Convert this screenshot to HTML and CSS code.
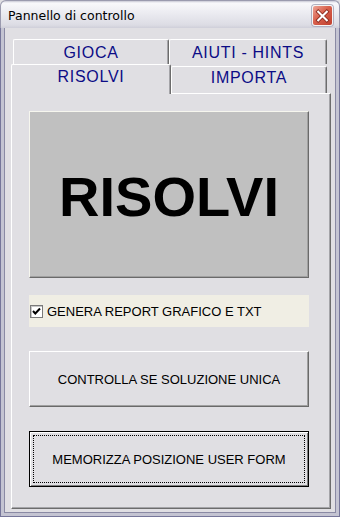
FILE: index.html
```html
<!DOCTYPE html>
<html lang="it">
<head>
<meta charset="utf-8">
<title>Pannello di controllo</title>
<link rel="stylesheet" href="styles.css">
</head>
<body>
<div class="window">
  <div class="titlebar">
    <span class="title">Pannello di controllo</span>
    <span class="close">
      <svg width="20" height="20" viewBox="0 0 20 20">
        <path d="M5.5 5.5 L14.5 14.5 M14.5 5.5 L5.5 14.5" stroke="#8a2a1e" stroke-width="4" stroke-linecap="square" fill="none"/>
        <path d="M5.5 5.5 L14.5 14.5 M14.5 5.5 L5.5 14.5" stroke="#ffffff" stroke-width="2.2" stroke-linecap="square" fill="none"/>
      </svg>
    </span>
  </div>
  <div class="frame">
    <div class="tabs">
      <div class="tabrow row1">
        <div class="tab t-gioca">GIOCA</div>
        <div class="tab t-aiuti">AIUTI - HINTS</div>
      </div>
      <div class="tabrow row2">
        <div class="tab t-risolvi selected">RISOLVI</div>
        <div class="tab t-importa">IMPORTA</div>
      </div>
    </div>
    <div class="panel">
      <div class="btn big">RISOLVI</div>
      <label class="check">
        <span class="box">
          <svg width="11" height="11" viewBox="0 0 11 11">
            <path d="M2 5 L4.3 7.5 L9 2.5" stroke="#000" stroke-width="2" fill="none"/>
          </svg>
        </span>
        <span class="check-label">GENERA REPORT GRAFICO E TXT</span>
      </label>
      <div class="btn normal">CONTROLLA SE SOLUZIONE UNICA</div>
      <div class="btn normal default">MEMORIZZA POSIZIONE USER FORM</div>
    </div>
  </div>
</div>
</body>
</html>
```
FILE: styles.css
```css
* { box-sizing: border-box; }
html, body { margin: 0; padding: 0; background: #e0dfe3; }

.window {
  width: 340px;
  height: 517px;
  display: flex;
  flex-direction: column;
  background: #e0dfe3;
}

.titlebar {
  flex: none;
  height: 28px;
  display: flex;
  align-items: center;
  justify-content: space-between;
  padding: 0 6px 0 7px;
  background: linear-gradient(to bottom, #c8c8d4 0px, #f8f8fb 2px, #eeeef3 10px, #dcdce4 24px, #cfcfd9 27px);
  border-top: 1px solid #9a9aae;
  border-left: 1px solid #9a9aae;
  border-right: 1px solid #9a9aae;
  border-radius: 6px 6px 0 0;
}

.title {
  font-family: "DejaVu Sans", sans-serif;
  font-size: 12.5px;
  color: #000;
  margin-top: 1px;
}

.close {
  width: 21px;
  height: 21px;
  margin-top: 2px;
  border-radius: 3px;
  border: 1px solid #f4f4f4;
  background: linear-gradient(135deg, #eda496 0%, #d8604c 45%, #c0402e 100%);
  box-shadow: 0 0 0 1px #b0b0c0;
  display: flex;
  align-items: center;
  justify-content: center;
}
.close svg { display: block; }

.frame {
  flex: 1;
  display: flex;
  flex-direction: column;
  padding: 11px 5px 4px 7px;
  border-left: 4px solid #c4c4d2;
  border-right: 4px solid #c4c4d2;
  border-bottom: 4px solid #c4c4d2;
  box-shadow: inset 1px 0 #8a8aa4, inset -1px 0 #8a8aa4, inset 0 -1px #8a8aa4;
  background: #e0dfe3;
  position: relative;
}
.frame::before {
  content: "";
  position: absolute;
  left: -4px; right: -4px; top: 0; bottom: -4px;
  border-left: 1px solid #76769a;
  border-right: 1px solid #76769a;
  border-bottom: 1px solid #76769a;
  pointer-events: none;
}

.tabs { flex: none; }

.tabrow {
  display: flex;
  align-items: flex-start;
}
.row1 { height: 25px; margin-left: 2px; }
.row2 { height: 29px; }

.tab {
  display: flex;
  justify-content: center;
  align-items: flex-start;
  font-family: "Liberation Sans", Arial, sans-serif;
  font-size: 16px;
  line-height: 18px;
  letter-spacing: 0.7px;
  color: #0c0c86;
  background: #e0dfe3;
  border-top: 1px solid #ffffff;
  border-left: 1px solid #ffffff;
  border-right: 1px solid #6c6c6c;
  box-shadow: inset -1px 0 #a4a4a8;
  border-radius: 2px 2px 0 0;
}

.t-gioca { width: 156px; height: 25px; padding-top: 4px; }
.t-aiuti { width: 158px; height: 25px; padding-top: 4px; }
.t-risolvi {
  width: 160px;
  height: 30px;
  padding-top: 3px;
  position: relative;
  z-index: 1;
}
.t-importa { width: 156px; height: 27px; margin-top: 2px; padding-top: 2px; }

.panel {
  flex: 1;
  display: flex;
  flex-direction: column;
  padding: 17px 0 0 17px;
  width: 320px;
  background: #e0dfe3;
  border-top: 1px solid #ffffff;
  border-left: 1px solid #ffffff;
  border-right: 1px solid #6c6c6c;
  border-bottom: 1px solid #6c6c6c;
  box-shadow: inset -1px -1px #a4a4a8;
}

.btn {
  width: 280px;
  display: flex;
  align-items: center;
  justify-content: center;
  font-family: "Liberation Sans", Arial, sans-serif;
  color: #000;
  border-top: 1px solid #ffffff;
  border-left: 1px solid #ffffff;
  border-right: 1px solid #6a6a6a;
  border-bottom: 1px solid #6a6a6a;
  box-shadow: inset -1px -1px #a0a0a0;
  position: relative;
}

.big {
  height: 167px;
  background: #c0c0c0;
  font-size: 56px;
  font-weight: bold;
  line-height: 56px;
  padding-top: 5px;
  border-top-color: #f6f6ee;
  border-left-color: #f6f6ee;
}

.check {
  width: 280px;
  height: 32px;
  margin-top: 17px;
  display: flex;
  align-items: center;
  padding-left: 1px;
  background: #f0eee4;
  font-family: "Liberation Sans", Arial, sans-serif;
  font-size: 13px;
  color: #000;
}
.box {
  width: 13px;
  height: 13px;
  flex: none;
  background: #ffffff;
  border: 1px solid #7a7a7a;
  box-shadow: inset 1px 1px #c8c8c8;
  display: flex;
  align-items: center;
  justify-content: center;
  margin-right: 4px;
}
.box svg { display: block; }

.normal {
  height: 56px;
  margin-top: 24px;
  background: #e0dfe3;
  font-size: 13px;
  padding-top: 1px;
}

.default {
  border: 1px solid #000000;
  box-shadow: inset 1px 1px #ffffff, inset -1px -1px #808080;
}
.default::after {
  content: "";
  position: absolute;
  left: 3px; right: 3px; top: 3px; bottom: 3px;
  border: 1px dotted #000;
  pointer-events: none;
}
```
